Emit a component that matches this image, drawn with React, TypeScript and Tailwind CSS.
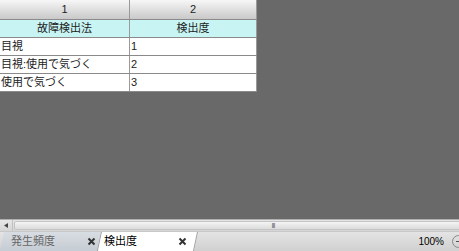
import React from "react";

const font = { fontFamily: '"Liberation Sans", "Noto Sans CJK JP", sans-serif' };

function X() {
  return (
    <svg width="9" height="9" viewBox="0 0 9 9" className="block">
      <path d="M1.5 1.5 L7.5 7.5 M7.5 1.5 L1.5 7.5" stroke="#333" strokeWidth="2" />
    </svg>
  );
}

export default function App() {
  const rows = [
    ["目視", "1"],
    ["目視:使用で気づく", "2"],
    ["使用で気づく", "3"],
  ];
  return (
    <div className="w-[459px] h-[251px] bg-[#696969] flex flex-col overflow-hidden text-[11px] text-[#222]" style={font}>
      <div className="flex-1 flex flex-col">
        <div className="w-[257px] flex flex-col">
          <div className="flex h-[20px] border-b border-[#8a8a8a]">
            <div className="w-[130px] flex items-center justify-center bg-gradient-to-b from-[#f7f7f7] to-[#c9c9c9] border-r border-[#9a9a9a]">1</div>
            <div className="flex-1 flex items-center justify-center bg-gradient-to-b from-[#f7f7f7] to-[#c9c9c9] border-r border-[#9a9a9a]">2</div>
          </div>
          <div className="flex h-[18px] bg-[#c8f4f4] border-b border-[#8a8a8a]">
            <div className="w-[130px] flex items-center justify-center border-r border-[#9a9a9a]">故障検出法</div>
            <div className="flex-1 flex items-center justify-center border-r border-[#9a9a9a]">検出度</div>
          </div>
          {rows.map((r, i) => (
            <div key={i} className="flex h-[18px] bg-white border-b border-[#8a8a8a]">
              <div className="w-[130px] flex items-center pl-[1px] border-r border-[#9a9a9a]">{r[0]}</div>
              <div className="flex-1 flex items-center pl-[1px] border-r border-[#9a9a9a]">{r[1]}</div>
            </div>
          ))}
        </div>
      </div>
      <div className="h-[12px] flex bg-gradient-to-b from-[#e6e6e6] to-[#d6d6d6] border-t border-[#b0b0b0] overflow-hidden">
        <div className="w-[13px] shrink-0 flex items-center justify-center border-r border-[#c0c0c0]">
          <svg width="4" height="5" viewBox="0 0 4 5"><path d="M4 0 L0 2.5 L4 5 Z" fill="#444" /></svg>
        </div>
        <div className="w-[518px] shrink-0 my-[1px] mx-[1px] bg-gradient-to-b from-[#f4f4f4] to-[#dcdcdc] border border-[#c4c4c4] rounded-[2px] flex items-center justify-center">
          <span className="text-[7px] leading-none text-[#666] tracking-[-1px]">III</span>
        </div>
      </div>
      <div className="h-[20px] flex items-stretch bg-gradient-to-b from-[#e4e4e4] to-[#d0d0d0] border-t border-[#c8c8c8]">
        <div className="w-[98px] flex items-center justify-between pl-[9px] pr-[3px] bg-gradient-to-b from-[#d8dde3] to-[#c6ccd3] text-[#666] border-r border-[#a0a0a0] -skew-x-12 ml-[2px]">
          <span className="skew-x-12">発生頻度</span>
          <span className="skew-x-12"><X /></span>
        </div>
        <div className="w-[96px] flex items-center justify-between pl-[4px] pr-[8px] bg-white -skew-x-12 border-r border-[#a0a0a0]">
          <span className="skew-x-12 text-black">検出度</span>
          <span className="skew-x-12"><X /></span>
        </div>
        <div className="flex-1" />
        <div className="flex items-center pr-[8px] text-black text-[10px]">100%</div>
        <div className="w-[13px] h-[13px] self-center rounded-full border border-[#888] flex items-center justify-center mr-[-6px]">
          <div className="w-[5px] h-[1px] bg-[#555]" />
        </div>
      </div>
    </div>
  );
}
